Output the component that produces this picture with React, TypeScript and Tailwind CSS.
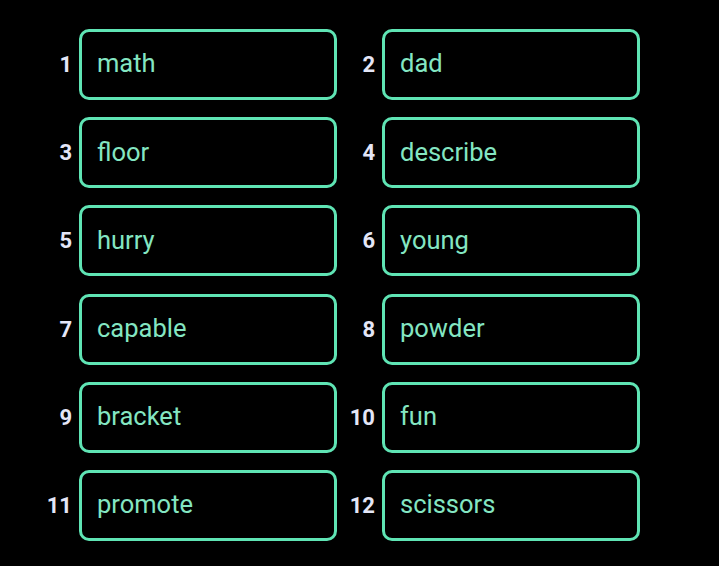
import React from 'react'

const words = [
    'math',
    'dad',
    'floor',
    'describe',
    'hurry',
    'young',
    'capable',
    'powder',
    'bracket',
    'fun',
    'promote',
    'scissors',
]

const WordSlot: React.FC<{ n: number; word: string }> = ({ n, word }) => (
    <div className="flex items-center gap-[7px]">
        <div className="w-[34px] text-right text-[22px] font-bold text-[#e4e6f7]">
            {n}
        </div>
        <div className="flex h-[71px] w-[258px] items-center rounded-[10px] border-[3px] border-[#5fe4b4] pb-[2px] pl-[15px] text-[25.5px] text-[#84e6c2]">
            {word}
        </div>
    </div>
)

export default function App() {
    return (
        <div
            className="h-[566px] w-[719px] bg-black pt-[29px] pl-[38px]"
            style={{ fontFamily: 'Roboto, "Liberation Sans", sans-serif' }}>
            <div className="grid w-max grid-cols-2 gap-x-[4px] gap-y-[17.2px]">
                {words.map((w, i) => (
                    <WordSlot key={i} n={i + 1} word={w} />
                ))}
            </div>
        </div>
    )
}
